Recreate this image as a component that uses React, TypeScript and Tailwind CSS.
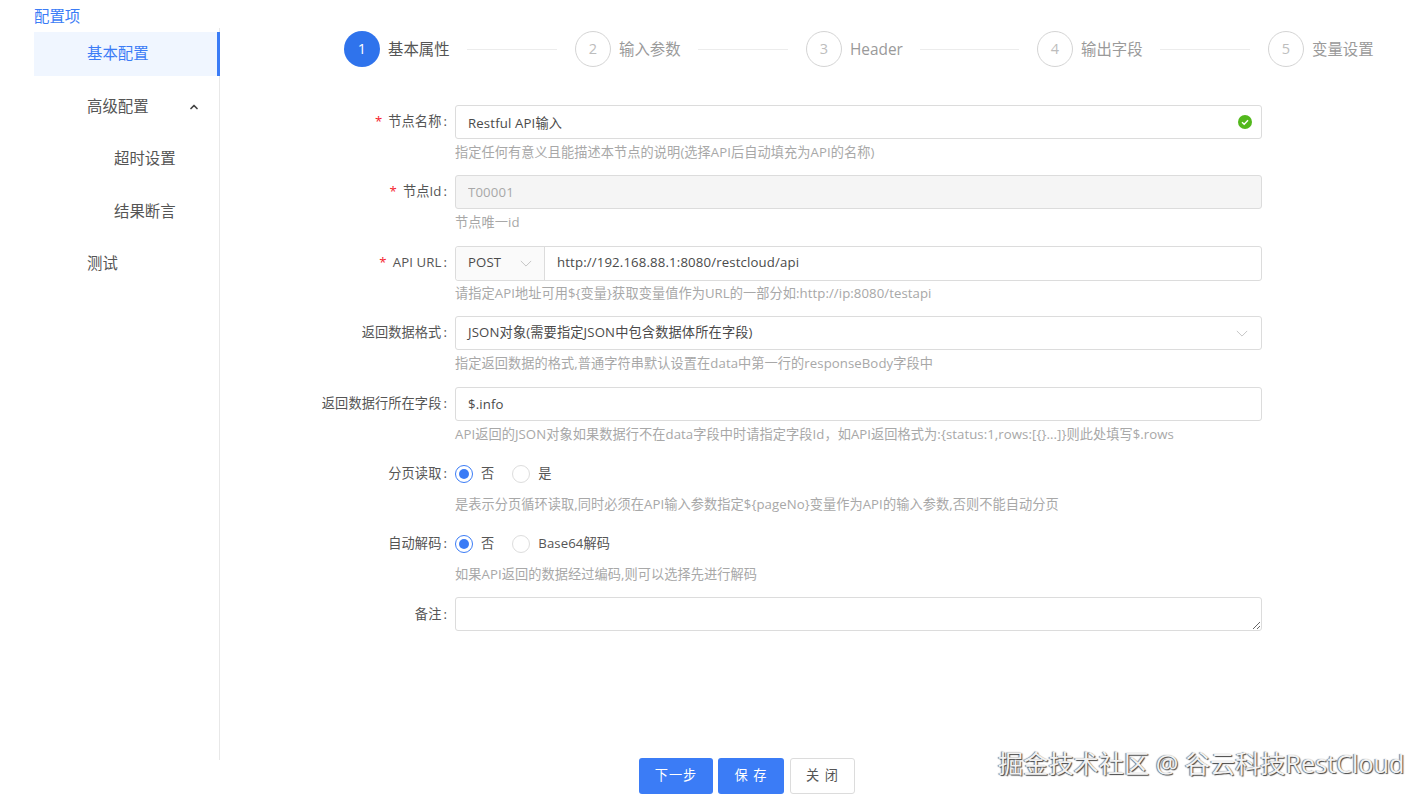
import { ChevronUp } from "lucide-react"

const font = "font-['Open_Sans','Noto_Sans_CJK_SC',sans-serif]"

const steps = ["基本属性", "输入参数", "Header", "输出字段", "变量设置"]

function Chevron({ className }: { className: string }) {
  return (
    <svg viewBox="0 0 14 8" fill="none" stroke="#bdbdbd" strokeWidth="1" className={className}>
      <path d="M1 1l6 6 6-6" />
    </svg>
  )
}

function Row({ label, required, help, children }: { label: string; required?: boolean; help?: string; children: React.ReactNode }) {
  return (
    <div className="flex h-[70.4px]">
      <div className="w-[228px] h-[34px] flex items-center justify-end text-[13.2px] text-[#555] tracking-[0.1px]">
        {required && <span className="text-[#f5222d] mr-[6px]">*</span>}
        <span>{label}</span>
        <span className="ml-[2px] mr-[1px]">:</span>
      </div>
      <div className="ml-[7px] w-[807px]">
        <div className="h-[35px]">{children}</div>
        {help && <div className="mt-[2px] text-[13.2px] leading-[20px] text-[#a8a8a8] whitespace-nowrap tracking-[0.07px]">{help}</div>}
      </div>
    </div>
  )
}

function Radio({ label, checked }: { label: string; checked?: boolean }) {
  return (
    <div className="flex items-center mr-[18px]">
      <span className={`w-[18px] h-[18px] rounded-full border flex items-center justify-center ${checked ? "border-[#3b7cf6]" : "border-[#ddd]"}`}>
        {checked && <span className="w-[10px] h-[10px] rounded-full bg-[#3b7cf6]" />}
      </span>
      <span className="ml-[8px] text-[13.2px] text-[#555] tracking-[0.1px]">{label}</span>
    </div>
  )
}

const box = "h-[34px] w-full border border-[#dcdcdc] rounded-[3px] px-[12px] text-[13.2px] text-[#4a4a4a] outline-none tracking-[0.15px]"

export default function App() {
  return (
    <div className={`relative h-[800px] w-[1428px] overflow-hidden bg-white ${font}`}>
      <div className="flex h-[760px]">
        {/* 左侧菜单 */}
        <aside className="w-[220px] shrink-0 pl-[34px] pt-[8px] flex flex-col">
          <div className="text-[15.4px] leading-[18px] text-[#3b7cf6]">配置项</div>
          <div className="flex-1 border-r border-[#e8e8e8] mt-[2px] pt-[4px] text-[15.4px] text-[#555]">
            <div className="h-[44px] bg-[#f0f6ff] border-r-[3px] border-[#3b7cf6] -mr-[1px] pl-[53px] flex items-center text-[#3b7cf6]">基本配置</div>
            <div className="h-[44px] mt-[8.5px] pl-[53px] pr-[19px] flex items-center justify-between">
              高级配置
              <ChevronUp className="w-[12px] h-[12px] text-[#444]" strokeWidth={3.5} />
            </div>
            <div className="h-[44px] mt-[8.5px] pl-[80px] flex items-center">超时设置</div>
            <div className="h-[44px] mt-[8.5px] pl-[80px] flex items-center">结果断言</div>
            <div className="h-[44px] mt-[8.5px] pl-[53px] flex items-center">测试</div>
          </div>
        </aside>

        <main className="flex-1">
          {/* 步骤条 */}
          <div className="flex pl-[124px] pt-[31px] h-[105px]">
            {steps.map((s, i) => (
              <div key={s} className={`flex items-center h-[36px] ${i < 4 ? "w-[231px]" : ""}`}>
                <span className={`w-[36px] h-[36px] shrink-0 rounded-full flex items-center justify-center text-[14.5px] ${i === 0 ? "bg-[#2f73ec] text-white" : "border border-[#d4d4d4] text-[#bdbdbd]"}`}>
                  {i + 1}
                </span>
                <span className={`ml-[8px] mt-[2px] text-[15.4px] whitespace-nowrap ${i === 0 ? "text-[#555]" : "text-[#9a9a9a]"}`}>{s}</span>
                {i < 4 && <span className="flex-1 h-px bg-[#ececec] ml-[17px] mr-[18px]" />}
              </div>
            ))}
          </div>

          {/* 表单 */}
          <div>
            <Row label="节点名称" required help="指定任何有意义且能描述本节点的说明(选择API后自动填充为API的名称)">
              <div className="relative">
                <input readOnly value="Restful API输入" className={box} />
                <svg viewBox="0 0 14 14" className="absolute right-[10px] top-[10px] w-[14px] h-[14px]">
                  <circle cx="7" cy="7" r="7" fill="#52b81c" />
                  <path d="M4 7.2l2.2 2.1L10 5.2" fill="none" stroke="#fff" strokeWidth="1.4" />
                </svg>
              </div>
            </Row>
            <Row label="节点Id" required help="节点唯一id">
              <input readOnly value="T00001" className={`${box} bg-[#f5f5f5] text-[#a8a8a8]`} />
            </Row>
            <Row label="API URL" required help="请指定API地址可用${变量}获取变量值作为URL的一部分如:http://ip:8080/testapi">
              <div className="flex h-[35px] border border-[#dcdcdc] rounded-[3px] text-[13.2px] text-[#4a4a4a] tracking-[0.15px]">
                <div className="w-[89px] bg-[#fafafa] border-r border-[#dcdcdc] pl-[12px] pr-[12px] flex items-center justify-between rounded-l-[3px]">
                  POST
                  <Chevron className="w-[12px] h-[7px]" />
                </div>
                <div className="pl-[12px] flex items-center">http://192.168.88.1:8080/restcloud/api</div>
              </div>
            </Row>
            <Row label="返回数据格式" help="指定返回数据的格式,普通字符串默认设置在data中第一行的responseBody字段中">
              <div className={`${box} flex items-center justify-between pr-[13px]`}>
                JSON对象(需要指定JSON中包含数据体所在字段)
                <Chevron className="w-[12px] h-[7px]" />
              </div>
            </Row>
            <Row label="返回数据行所在字段" help="API返回的JSON对象如果数据行不在data字段中时请指定字段Id，如API返回格式为:{status:1,rows:[{}...]}则此处填写$.rows">
              <input readOnly value="$.info" className={box} />
            </Row>
            <Row label="分页读取" help="是表示分页循环读取,同时必须在API输入参数指定${pageNo}变量作为API的输入参数,否则不能自动分页">
              <div className="flex items-center h-[34px]">
                <Radio label="否" checked />
                <Radio label="是" />
              </div>
            </Row>
            <Row label="自动解码" help="如果API返回的数据经过编码,则可以选择先进行解码">
              <div className="flex items-center h-[34px]">
                <Radio label="否" checked />
                <Radio label="Base64解码" />
              </div>
            </Row>
            <Row label="备注">
              <textarea readOnly className={`${box} block py-1 -mt-[1px]`} />
            </Row>
          </div>
        </main>
      </div>

      {/* 底部按钮 */}
      <div className="flex -mt-[2px] pl-[639px] text-[13.2px] tracking-[1px]">
        <button className="w-[74px] h-[36px] rounded-[3px] bg-[#3b7cf6] text-white">下一步</button>
        <button className="w-[66px] h-[36px] ml-[5px] rounded-[3px] bg-[#3b7cf6] text-white">保 存</button>
        <button className="w-[65px] h-[36px] ml-[6px] rounded-[3px] border border-[#dcdcdc] bg-white text-[#555]">关 闭</button>
      </div>

      {/* 水印 */}
      <div className="absolute left-[998px] top-[747px] text-[25.2px] leading-[32px] whitespace-nowrap text-[#f2f2f2] [text-shadow:1px_1px_1px_#444,-1px_0_1px_#777]">
        掘金技术社区 @ 谷云科技RestCloud
      </div>
    </div>
  )
}
